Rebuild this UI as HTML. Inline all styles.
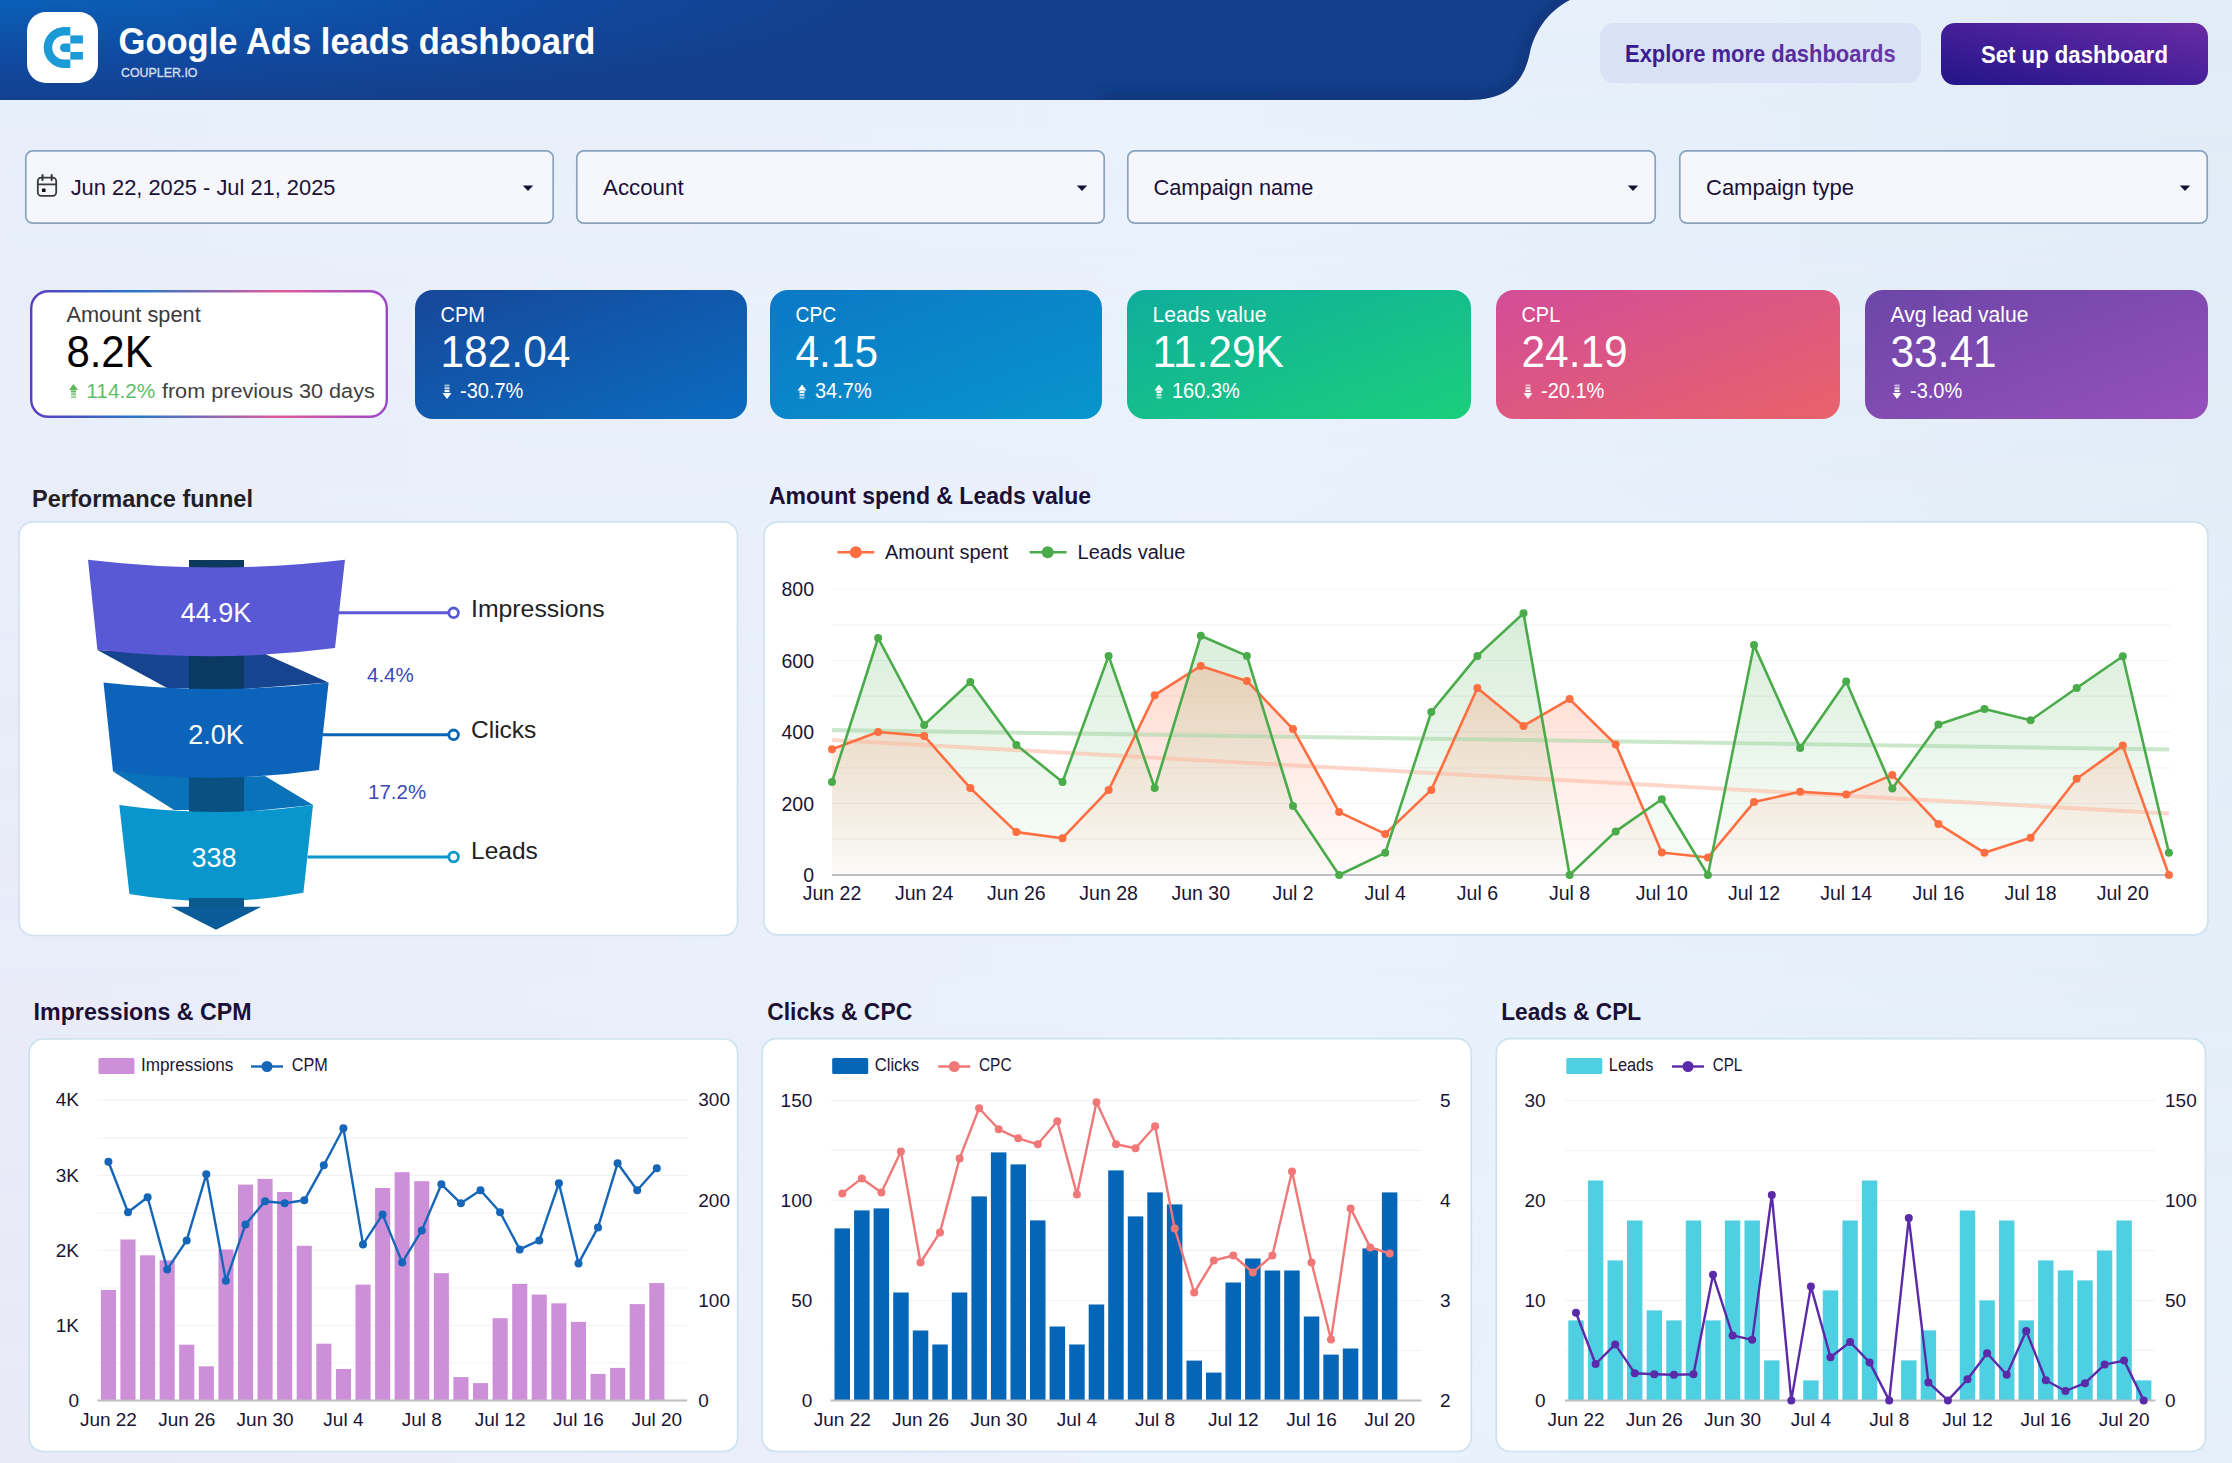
<!DOCTYPE html>
<html><head><meta charset="utf-8"><title>Google Ads leads dashboard</title>
<style>html,body{margin:0;padding:0;width:2232px;height:1463px;overflow:hidden;background:#e9f0fa;}
svg{display:block;font-family:"Liberation Sans", sans-serif;}</style></head>
<body><svg width="2232" height="1463" viewBox="0 0 2232 1463"><defs>
<linearGradient id="bgT" x1="0" y1="0" x2="1" y2="0">
  <stop offset="0" stop-color="#e8f0fb"/>
  <stop offset="0.55" stop-color="#eaf2fc"/>
  <stop offset="1" stop-color="#e1ecf8"/>
</linearGradient>
<linearGradient id="bgB" x1="0" y1="0" x2="1" y2="0">
  <stop offset="0" stop-color="#e9e9f7"/>
  <stop offset="0.55" stop-color="#eaf2fc"/>
  <stop offset="1" stop-color="#e5eff9"/>
</linearGradient>
<linearGradient id="mv" x1="0" y1="0" x2="0" y2="1">
  <stop offset="0" stop-color="#fff" stop-opacity="0"/>
  <stop offset="1" stop-color="#fff" stop-opacity="1"/>
</linearGradient>
<mask id="mB"><rect x="0" y="0" width="2232" height="1463" fill="url(#mv)"/></mask>
<radialGradient id="hdr" gradientUnits="userSpaceOnUse" cx="0" cy="0" r="100" gradientTransform="translate(0,-10) scale(9,1.2)">
  <stop offset="0" stop-color="#0a62ba"/>
  <stop offset="0.6" stop-color="#1049a0"/>
  <stop offset="1" stop-color="#143f8b"/>
</radialGradient>
<linearGradient id="btn2" x1="0" y1="1" x2="1" y2="0">
  <stop offset="0" stop-color="#22148a"/>
  <stop offset="1" stop-color="#6a2ca6"/>
</linearGradient>
<linearGradient id="btn1t" x1="0" y1="0" x2="1" y2="0">
  <stop offset="0" stop-color="#331a8e"/>
  <stop offset="1" stop-color="#6a36a8"/>
</linearGradient>
<linearGradient id="k1b" x1="0" y1="0" x2="1" y2="0">
  <stop offset="0" stop-color="#5a3cc0"/>
  <stop offset="0.3" stop-color="#2a78c8"/>
  <stop offset="0.7" stop-color="#e05a9a"/>
  <stop offset="1" stop-color="#9a48c8"/>
</linearGradient>
<linearGradient id="k2" x1="0" y1="0" x2="1" y2="1">
  <stop offset="0" stop-color="#17479a"/>
  <stop offset="1" stop-color="#0a6cc0"/>
</linearGradient>
<linearGradient id="k3" x1="0" y1="0" x2="1" y2="1">
  <stop offset="0" stop-color="#0b78c6"/>
  <stop offset="1" stop-color="#0895cc"/>
</linearGradient>
<linearGradient id="k4" x1="0" y1="0" x2="1" y2="1">
  <stop offset="0" stop-color="#10ad9c"/>
  <stop offset="1" stop-color="#1acf7c"/>
</linearGradient>
<linearGradient id="k5" x1="0" y1="0" x2="1" y2="1">
  <stop offset="0" stop-color="#d24d98"/>
  <stop offset="1" stop-color="#e9626a"/>
</linearGradient>
<linearGradient id="k6" x1="0" y1="0" x2="1" y2="1">
  <stop offset="0" stop-color="#6c46a8"/>
  <stop offset="1" stop-color="#9650bc"/>
</linearGradient>
<linearGradient id="fillG" x1="0" y1="0" x2="0" y2="1">
  <stop offset="0" stop-color="#4caf50" stop-opacity="0.22"/>
  <stop offset="1" stop-color="#4caf50" stop-opacity="0.02"/>
</linearGradient>
<linearGradient id="fillO" x1="0" y1="0" x2="0" y2="1">
  <stop offset="0" stop-color="#ff7043" stop-opacity="0.25"/>
  <stop offset="1" stop-color="#ff7043" stop-opacity="0.02"/>
</linearGradient>
<clipPath id="hclip"><path d="M0,0 L1570,0 C1546,12 1534,34 1530,52 C1524,82 1508,100 1468,100 L0,100 Z"/></clipPath><filter id="hblur" x="-5%" y="-50%" width="110%" height="200%"><feGaussianBlur stdDeviation="6"/></filter></defs>
<rect x="0" y="0" width="2232" height="1463" fill="url(#bgT)"/>
<rect x="0" y="0" width="2232" height="1463" fill="url(#bgB)" mask="url(#mB)"/>
<path d="M0,0 L1570,0 C1546,12 1534,34 1530,52 C1524,82 1508,100 1468,100 L0,100 Z" fill="url(#hdr)"/>
<g clip-path="url(#hclip)"><path d="M1570,0 C1546,12 1534,34 1530,52 C1524,82 1508,100 1468,100 L1100,100" fill="none" stroke="#0c2c68" stroke-width="12" opacity="0.45" filter="url(#hblur)"/></g>
<rect x="27" y="12" width="71" height="71" rx="19" fill="#ffffff"/>
<path d="M70.3,26.9 L64.3,26.9 A20.6,20.6 0 0 0 64.3,68.1 L70.3,68.1 L70.3,59.6 L64.3,59.6 A12.1,12.1 0 0 1 64.3,35.4 L70.3,35.4 Z" fill="#1b9ad6"/>
<rect x="70.3" y="35.4" width="12.6" height="8.1" fill="#1b9ad6"/>
<rect x="70.3" y="52" width="12.6" height="7.6" fill="#1b9ad6"/>
<path d="M70.3,43.5 L64.2,43.5 A4.25,4.25 0 0 0 64.2,52 L70.3,52 Z" fill="#1b9ad6"/>
<text x="118.5" y="54" font-size="37.5" font-weight="bold" fill="#ffffff" text-anchor="start" textLength="477" lengthAdjust="spacingAndGlyphs">Google Ads leads dashboard</text>
<text x="121" y="76.6" font-size="13" font-weight="normal" fill="#d5def0" text-anchor="start" textLength="76.5" lengthAdjust="spacingAndGlyphs" stroke="#d5def0" stroke-width="0.35">COUPLER.IO</text>
<rect x="1600" y="23" width="321" height="60" rx="14" fill="#d9e2f4"/>
<text x="1625" y="62.4" font-size="24" font-weight="bold" fill="url(#btn1t)" text-anchor="start" textLength="270.6" lengthAdjust="spacingAndGlyphs">Explore more dashboards</text>
<rect x="1941" y="23" width="267" height="62" rx="14" fill="url(#btn2)"/>
<text x="1981" y="63.2" font-size="24" font-weight="bold" fill="#ffffff" text-anchor="start" textLength="187" lengthAdjust="spacingAndGlyphs">Set up dashboard</text>
<rect x="25.8" y="150.8" width="527.4" height="72.4" rx="7" fill="#f5f7fc" stroke="#8aa3bd" stroke-width="1.7"/>
<text x="70.7" y="195" font-size="22" font-weight="normal" fill="#1a1038" text-anchor="start" textLength="264.8" lengthAdjust="spacingAndGlyphs">Jun 22, 2025 - Jul 21, 2025</text>
<path d="M522.8,185.5 L533.2,185.5 L528,191 Z" fill="#141233"/>
<rect x="576.8" y="150.8" width="527.4" height="72.4" rx="7" fill="#f5f7fc" stroke="#8aa3bd" stroke-width="1.7"/>
<text x="603" y="195" font-size="22" font-weight="normal" fill="#1a1038" text-anchor="start" textLength="80.6" lengthAdjust="spacingAndGlyphs">Account</text>
<path d="M1076.8,185.5 L1087.2,185.5 L1082,191 Z" fill="#141233"/>
<rect x="1127.8" y="150.8" width="527.4" height="72.4" rx="7" fill="#f5f7fc" stroke="#8aa3bd" stroke-width="1.7"/>
<text x="1153.5" y="195" font-size="22" font-weight="normal" fill="#1a1038" text-anchor="start" textLength="159.9" lengthAdjust="spacingAndGlyphs">Campaign name</text>
<path d="M1627.8,185.5 L1638.2,185.5 L1633,191 Z" fill="#141233"/>
<rect x="1679.8" y="150.8" width="527.4" height="72.4" rx="7" fill="#f5f7fc" stroke="#8aa3bd" stroke-width="1.7"/>
<text x="1706" y="195" font-size="22" font-weight="normal" fill="#1a1038" text-anchor="start">Campaign type</text>
<path d="M2179.8,185.5 L2190.2,185.5 L2185,191 Z" fill="#141233"/>
<g fill="none" stroke="#3a3a3a" stroke-width="1.8"><rect x="37.8" y="177.6" width="18.4" height="18.2" rx="3.5"/><line x1="37.8" y1="184.4" x2="56.2" y2="184.4"/></g>
<g stroke="#333" stroke-width="2" stroke-linecap="round"><line x1="42.5" y1="175" x2="42.5" y2="180"/><line x1="51.7" y1="175" x2="51.7" y2="180"/></g>
<rect x="42" y="188.4" width="3.6" height="3.6" rx="0.6" fill="#111"/>
<rect x="31.2" y="291.2" width="355.6" height="125.6" rx="17" fill="#ffffff" stroke="url(#k1b)" stroke-width="2.4"/>
<text x="66.4" y="322" font-size="21.5" font-weight="normal" fill="#3a3a3a" text-anchor="start" textLength="134.3" lengthAdjust="spacingAndGlyphs">Amount spent</text>
<text x="66.4" y="367" font-size="44" font-weight="normal" fill="#000000" text-anchor="start" textLength="86.2" lengthAdjust="spacingAndGlyphs">8.2K</text>
<path d="M73.5,384 L78,390 L69,390 Z" fill="#5cb85c"/>
<rect x="71" y="390.5" width="5" height="2" fill="#5cb85c" opacity="1.0"/>
<rect x="71" y="393.3" width="5" height="2" fill="#5cb85c" opacity="0.8"/>
<rect x="71" y="396.1" width="5" height="2" fill="#5cb85c" opacity="0.6"/>
<text x="86.3" y="397.7" font-size="20.5" font-weight="normal" fill="#5cbf6a" text-anchor="start" textLength="69" lengthAdjust="spacingAndGlyphs">114.2%</text>
<text x="161.9" y="397.7" font-size="20.5" font-weight="normal" fill="#3f3f3f" text-anchor="start" textLength="212.9" lengthAdjust="spacingAndGlyphs">from previous 30 days</text>
<rect x="415" y="290" width="332" height="129" rx="18" fill="url(#k2)"/>
<text x="440.5" y="322" font-size="21.5" font-weight="normal" fill="#ffffff" text-anchor="start" textLength="44.4" lengthAdjust="spacingAndGlyphs">CPM</text>
<text x="440.5" y="367" font-size="44" font-weight="normal" fill="#ffffff" text-anchor="start" textLength="129.9" lengthAdjust="spacingAndGlyphs">182.04</text>
<rect x="444.5" y="384.5" width="5" height="2" fill="#ffffff" opacity="0.6"/>
<rect x="444.5" y="387.3" width="5" height="2" fill="#ffffff" opacity="0.8"/>
<rect x="444.5" y="390.1" width="5" height="2" fill="#ffffff" opacity="1.0"/>
<path d="M442.5,393.0 L451.5,393.0 L447.0,399.0 Z" fill="#ffffff"/>
<text x="460.0" y="397.8" font-size="21.5" font-weight="normal" fill="#ffffff" text-anchor="start" textLength="63.4" lengthAdjust="spacingAndGlyphs">-30.7%</text>
<rect x="770" y="290" width="332" height="129" rx="18" fill="url(#k3)"/>
<text x="795.5" y="322" font-size="21.5" font-weight="normal" fill="#ffffff" text-anchor="start" textLength="40.8" lengthAdjust="spacingAndGlyphs">CPC</text>
<text x="795.5" y="367" font-size="44" font-weight="normal" fill="#ffffff" text-anchor="start" textLength="82.6" lengthAdjust="spacingAndGlyphs">4.15</text>
<path d="M802.0,384.5 L806.5,390.5 L797.5,390.5 Z" fill="#ffffff"/>
<rect x="799.5" y="391.0" width="5" height="2" fill="#ffffff" opacity="1.0"/>
<rect x="799.5" y="393.8" width="5" height="2" fill="#ffffff" opacity="0.8"/>
<rect x="799.5" y="396.6" width="5" height="2" fill="#ffffff" opacity="0.6"/>
<text x="815.0" y="397.8" font-size="21.5" font-weight="normal" fill="#ffffff" text-anchor="start" textLength="56.7" lengthAdjust="spacingAndGlyphs">34.7%</text>
<rect x="1127" y="290" width="344" height="129" rx="18" fill="url(#k4)"/>
<text x="1152.5" y="322" font-size="21.5" font-weight="normal" fill="#ffffff" text-anchor="start" textLength="114" lengthAdjust="spacingAndGlyphs">Leads value</text>
<text x="1152.5" y="367" font-size="44" font-weight="normal" fill="#ffffff" text-anchor="start" textLength="131.4" lengthAdjust="spacingAndGlyphs">11.29K</text>
<path d="M1159.0,384.5 L1163.5,390.5 L1154.5,390.5 Z" fill="#ffffff"/>
<rect x="1156.5" y="391.0" width="5" height="2" fill="#ffffff" opacity="1.0"/>
<rect x="1156.5" y="393.8" width="5" height="2" fill="#ffffff" opacity="0.8"/>
<rect x="1156.5" y="396.6" width="5" height="2" fill="#ffffff" opacity="0.6"/>
<text x="1172.0" y="397.8" font-size="21.5" font-weight="normal" fill="#ffffff" text-anchor="start" textLength="67.8" lengthAdjust="spacingAndGlyphs">160.3%</text>
<rect x="1496" y="290" width="344" height="129" rx="18" fill="url(#k5)"/>
<text x="1521.5" y="322" font-size="21.5" font-weight="normal" fill="#ffffff" text-anchor="start" textLength="38.7" lengthAdjust="spacingAndGlyphs">CPL</text>
<text x="1521.5" y="367" font-size="44" font-weight="normal" fill="#ffffff" text-anchor="start" textLength="106.2" lengthAdjust="spacingAndGlyphs">24.19</text>
<rect x="1525.5" y="384.5" width="5" height="2" fill="#ffffff" opacity="0.6"/>
<rect x="1525.5" y="387.3" width="5" height="2" fill="#ffffff" opacity="0.8"/>
<rect x="1525.5" y="390.1" width="5" height="2" fill="#ffffff" opacity="1.0"/>
<path d="M1523.5,393.0 L1532.5,393.0 L1528.0,399.0 Z" fill="#ffffff"/>
<text x="1541.0" y="397.8" font-size="21.5" font-weight="normal" fill="#ffffff" text-anchor="start" textLength="63.4" lengthAdjust="spacingAndGlyphs">-20.1%</text>
<rect x="1865" y="290" width="343" height="129" rx="18" fill="url(#k6)"/>
<text x="1890.5" y="322" font-size="21.5" font-weight="normal" fill="#ffffff" text-anchor="start" textLength="138" lengthAdjust="spacingAndGlyphs">Avg lead value</text>
<text x="1890.5" y="367" font-size="44" font-weight="normal" fill="#ffffff" text-anchor="start" textLength="106.2" lengthAdjust="spacingAndGlyphs">33.41</text>
<rect x="1894.5" y="384.5" width="5" height="2" fill="#ffffff" opacity="0.6"/>
<rect x="1894.5" y="387.3" width="5" height="2" fill="#ffffff" opacity="0.8"/>
<rect x="1894.5" y="390.1" width="5" height="2" fill="#ffffff" opacity="1.0"/>
<path d="M1892.5,393.0 L1901.5,393.0 L1897.0,399.0 Z" fill="#ffffff"/>
<text x="1910.0" y="397.8" font-size="21.5" font-weight="normal" fill="#ffffff" text-anchor="start" textLength="52.2" lengthAdjust="spacingAndGlyphs">-3.0%</text>
<text x="32" y="507" font-size="24" font-weight="bold" fill="#1f1f2a" text-anchor="start" textLength="221" lengthAdjust="spacingAndGlyphs">Performance funnel</text>
<text x="769" y="503.6" font-size="24" font-weight="bold" fill="#1a0f35" text-anchor="start" textLength="322" lengthAdjust="spacingAndGlyphs">Amount spend &amp; Leads value</text>
<text x="33.6" y="1020.2" font-size="24" font-weight="bold" fill="#1a0f35" text-anchor="start" textLength="218" lengthAdjust="spacingAndGlyphs">Impressions &amp; CPM</text>
<text x="767.2" y="1019.8" font-size="24" font-weight="bold" fill="#1a0f35" text-anchor="start" textLength="145" lengthAdjust="spacingAndGlyphs">Clicks &amp; CPC</text>
<text x="1501.2" y="1020.3" font-size="24" font-weight="bold" fill="#1a0f35" text-anchor="start" textLength="140" lengthAdjust="spacingAndGlyphs">Leads &amp; CPL</text>
<rect x="19.0" y="521.9" width="718.5" height="413.6" rx="14" fill="#ffffff" stroke="#cde2ee" stroke-width="1.7"/>
<rect x="763.9" y="521.9" width="1444.0" height="413.0" rx="14" fill="#ffffff" stroke="#cde2ee" stroke-width="1.7"/>
<rect x="29.1" y="1039.0" width="708.6" height="412.5" rx="14" fill="#ffffff" stroke="#cde2ee" stroke-width="1.7"/>
<rect x="762.1" y="1038.7" width="709.1999999999999" height="412.79999999999995" rx="14" fill="#ffffff" stroke="#cde2ee" stroke-width="1.7"/>
<rect x="1496.3" y="1038.7" width="709.2" height="412.79999999999995" rx="14" fill="#ffffff" stroke="#cde2ee" stroke-width="1.7"/>
<rect x="189" y="560" width="55" height="350" fill="#0b3a5e"/>
<path d="M97.4,650 L168,688.4 L189,688.4 L189,655 Z" fill="#16448f"/>
<path d="M244,655 L265,654 L328.6,682.4 L244,689 Z" fill="#16448f"/>
<rect x="189" y="655" width="55" height="34" fill="#0a3a62"/>
<path d="M113,771.4 L174,810 L189,810 L189,777 Z" fill="#0a72b8"/>
<path d="M244,777 L265,776 L313,805 L244,812 Z" fill="#0a72b8"/>
<rect x="189" y="777" width="55" height="35" fill="#0a5080"/>
<path d="M88,559.7 Q216.5,575.0999999999999 345,559.7 L335,648 Q216.5,663.5999999999999 97.4,649.8 Z" fill="#5959d6"/>
<path d="M103.5,682.4 Q216.05,695.6 328.6,682.4 L319,770 Q216.05,785.0 113,771.4 Z" fill="#0b64b9"/>
<path d="M119.3,805 Q216.15,819 313,805 L303.4,892.7 Q216.15,908.8999999999999 129.4,894 Z" fill="#0896cc"/>
<rect x="189" y="898" width="55" height="10" fill="#0a5a90"/>
<path d="M171,906.8 L261.4,906.8 L216,929.7 Z" fill="#0a5c98"/>
<text x="216" y="622" font-size="27" font-weight="normal" fill="#ffffff" text-anchor="middle">44.9K</text>
<text x="216" y="744" font-size="27" font-weight="normal" fill="#ffffff" text-anchor="middle">2.0K</text>
<text x="214" y="866.5" font-size="27" font-weight="normal" fill="#ffffff" text-anchor="middle">338</text>
<line x1="337.7" y1="612.8" x2="450" y2="612.8" stroke="#5959d6" stroke-width="3"/>
<circle cx="453.6" cy="612.8" r="4.8" fill="#ffffff" stroke="#5959d6" stroke-width="2.8"/>
<line x1="322.6" y1="734.8" x2="450" y2="734.8" stroke="#0b64b9" stroke-width="3"/>
<circle cx="453.6" cy="734.8" r="4.8" fill="#ffffff" stroke="#0b64b9" stroke-width="2.8"/>
<line x1="307.5" y1="857" x2="450" y2="857" stroke="#0896cc" stroke-width="3"/>
<circle cx="453.6" cy="857" r="4.8" fill="#ffffff" stroke="#0896cc" stroke-width="2.8"/>
<text x="471" y="617" font-size="24.5" font-weight="normal" fill="#222222" text-anchor="start" textLength="133.7" lengthAdjust="spacingAndGlyphs">Impressions</text>
<text x="471" y="738" font-size="24.5" font-weight="normal" fill="#222222" text-anchor="start">Clicks</text>
<text x="471" y="859" font-size="24.5" font-weight="normal" fill="#222222" text-anchor="start">Leads</text>
<text x="367" y="682.4" font-size="20.5" font-weight="normal" fill="#3a48b8" text-anchor="start">4.4%</text>
<text x="368" y="798.6" font-size="20.5" font-weight="normal" fill="#3a48b8" text-anchor="start">17.2%</text>
<line x1="832.0" y1="839.2" x2="2170" y2="839.2" stroke="#f3f3f6" stroke-width="1.2"/>
<line x1="832.0" y1="803.5" x2="2170" y2="803.5" stroke="#f3f3f6" stroke-width="1.2"/>
<line x1="832.0" y1="767.8" x2="2170" y2="767.8" stroke="#f3f3f6" stroke-width="1.2"/>
<line x1="832.0" y1="732.0" x2="2170" y2="732.0" stroke="#f3f3f6" stroke-width="1.2"/>
<line x1="832.0" y1="696.2" x2="2170" y2="696.2" stroke="#f3f3f6" stroke-width="1.2"/>
<line x1="832.0" y1="660.5" x2="2170" y2="660.5" stroke="#f3f3f6" stroke-width="1.2"/>
<line x1="832.0" y1="624.8" x2="2170" y2="624.8" stroke="#f3f3f6" stroke-width="1.2"/>
<line x1="832.0" y1="589.0" x2="2170" y2="589.0" stroke="#f3f3f6" stroke-width="1.2"/>
<text x="814" y="882.0" font-size="19.5" font-weight="normal" fill="#1a1535" text-anchor="end">0</text>
<text x="814" y="810.5" font-size="19.5" font-weight="normal" fill="#1a1535" text-anchor="end">200</text>
<text x="814" y="739.0" font-size="19.5" font-weight="normal" fill="#1a1535" text-anchor="end">400</text>
<text x="814" y="667.5" font-size="19.5" font-weight="normal" fill="#1a1535" text-anchor="end">600</text>
<text x="814" y="596.0" font-size="19.5" font-weight="normal" fill="#1a1535" text-anchor="end">800</text>
<path d="M832.0,875.0 L832.0,782.0 L878.1,638.0 L924.2,724.9 L970.3,682.0 L1016.4,744.9 L1062.5,782.0 L1108.6,655.9 L1154.7,788.1 L1200.8,635.8 L1246.9,655.9 L1293.0,806.0 L1339.1,875.0 L1385.2,852.8 L1431.3,712.0 L1477.4,655.9 L1523.5,613.3 L1569.6,875.0 L1615.7,831.4 L1661.8,799.2 L1707.9,875.0 L1754.0,645.1 L1800.1,748.1 L1846.2,681.6 L1892.3,788.5 L1938.4,724.5 L1984.5,709.1 L2030.6,720.2 L2076.7,688.0 L2122.8,656.2 L2168.9,852.8 L2168.9,875.0 Z" fill="url(#fillG)"/>
<path d="M832.0,875.0 L832.0,749.2 L878.1,732.0 L924.2,735.9 L970.3,788.1 L1016.4,832.1 L1062.5,838.2 L1108.6,789.9 L1154.7,695.2 L1200.8,665.9 L1246.9,680.9 L1293.0,729.1 L1339.1,812.1 L1385.2,833.9 L1431.3,789.9 L1477.4,688.0 L1523.5,725.9 L1569.6,699.1 L1615.7,744.5 L1661.8,852.5 L1707.9,857.5 L1754.0,802.1 L1800.1,791.7 L1846.2,794.6 L1892.3,774.9 L1938.4,823.9 L1984.5,852.8 L2030.6,837.8 L2076.7,778.8 L2122.8,745.6 L2168.9,875.0 L2168.9,875.0 Z" fill="url(#fillO)"/>
<line x1="832.0" y1="730" x2="2169" y2="749.5" stroke="#a8d8a8" stroke-width="4" opacity="0.6"/>
<line x1="832.0" y1="740" x2="2169" y2="813.5" stroke="#ffb8a0" stroke-width="4" opacity="0.55"/>
<line x1="832.0" y1="875.0" x2="2169" y2="875.0" stroke="#bdbdc4" stroke-width="2"/>
<polyline points="832.0,749.2 878.1,732.0 924.2,735.9 970.3,788.1 1016.4,832.1 1062.5,838.2 1108.6,789.9 1154.7,695.2 1200.8,665.9 1246.9,680.9 1293.0,729.1 1339.1,812.1 1385.2,833.9 1431.3,789.9 1477.4,688.0 1523.5,725.9 1569.6,699.1 1615.7,744.5 1661.8,852.5 1707.9,857.5 1754.0,802.1 1800.1,791.7 1846.2,794.6 1892.3,774.9 1938.4,823.9 1984.5,852.8 2030.6,837.8 2076.7,778.8 2122.8,745.6 2168.9,875.0" fill="none" stroke="#ff6e40" stroke-width="2.6" stroke-linejoin="round"/>
<circle cx="832.0" cy="749.2" r="4" fill="#ff6e40"/>
<circle cx="878.1" cy="732.0" r="4" fill="#ff6e40"/>
<circle cx="924.2" cy="735.9" r="4" fill="#ff6e40"/>
<circle cx="970.3" cy="788.1" r="4" fill="#ff6e40"/>
<circle cx="1016.4" cy="832.1" r="4" fill="#ff6e40"/>
<circle cx="1062.5" cy="838.2" r="4" fill="#ff6e40"/>
<circle cx="1108.6" cy="789.9" r="4" fill="#ff6e40"/>
<circle cx="1154.7" cy="695.2" r="4" fill="#ff6e40"/>
<circle cx="1200.8" cy="665.9" r="4" fill="#ff6e40"/>
<circle cx="1246.9" cy="680.9" r="4" fill="#ff6e40"/>
<circle cx="1293.0" cy="729.1" r="4" fill="#ff6e40"/>
<circle cx="1339.1" cy="812.1" r="4" fill="#ff6e40"/>
<circle cx="1385.2" cy="833.9" r="4" fill="#ff6e40"/>
<circle cx="1431.3" cy="789.9" r="4" fill="#ff6e40"/>
<circle cx="1477.4" cy="688.0" r="4" fill="#ff6e40"/>
<circle cx="1523.5" cy="725.9" r="4" fill="#ff6e40"/>
<circle cx="1569.6" cy="699.1" r="4" fill="#ff6e40"/>
<circle cx="1615.7" cy="744.5" r="4" fill="#ff6e40"/>
<circle cx="1661.8" cy="852.5" r="4" fill="#ff6e40"/>
<circle cx="1707.9" cy="857.5" r="4" fill="#ff6e40"/>
<circle cx="1754.0" cy="802.1" r="4" fill="#ff6e40"/>
<circle cx="1800.1" cy="791.7" r="4" fill="#ff6e40"/>
<circle cx="1846.2" cy="794.6" r="4" fill="#ff6e40"/>
<circle cx="1892.3" cy="774.9" r="4" fill="#ff6e40"/>
<circle cx="1938.4" cy="823.9" r="4" fill="#ff6e40"/>
<circle cx="1984.5" cy="852.8" r="4" fill="#ff6e40"/>
<circle cx="2030.6" cy="837.8" r="4" fill="#ff6e40"/>
<circle cx="2076.7" cy="778.8" r="4" fill="#ff6e40"/>
<circle cx="2122.8" cy="745.6" r="4" fill="#ff6e40"/>
<circle cx="2168.9" cy="875.0" r="4" fill="#ff6e40"/>
<polyline points="832.0,782.0 878.1,638.0 924.2,724.9 970.3,682.0 1016.4,744.9 1062.5,782.0 1108.6,655.9 1154.7,788.1 1200.8,635.8 1246.9,655.9 1293.0,806.0 1339.1,875.0 1385.2,852.8 1431.3,712.0 1477.4,655.9 1523.5,613.3 1569.6,875.0 1615.7,831.4 1661.8,799.2 1707.9,875.0 1754.0,645.1 1800.1,748.1 1846.2,681.6 1892.3,788.5 1938.4,724.5 1984.5,709.1 2030.6,720.2 2076.7,688.0 2122.8,656.2 2168.9,852.8" fill="none" stroke="#4aab4a" stroke-width="2.6" stroke-linejoin="round"/>
<circle cx="832.0" cy="782.0" r="4" fill="#4aab4a"/>
<circle cx="878.1" cy="638.0" r="4" fill="#4aab4a"/>
<circle cx="924.2" cy="724.9" r="4" fill="#4aab4a"/>
<circle cx="970.3" cy="682.0" r="4" fill="#4aab4a"/>
<circle cx="1016.4" cy="744.9" r="4" fill="#4aab4a"/>
<circle cx="1062.5" cy="782.0" r="4" fill="#4aab4a"/>
<circle cx="1108.6" cy="655.9" r="4" fill="#4aab4a"/>
<circle cx="1154.7" cy="788.1" r="4" fill="#4aab4a"/>
<circle cx="1200.8" cy="635.8" r="4" fill="#4aab4a"/>
<circle cx="1246.9" cy="655.9" r="4" fill="#4aab4a"/>
<circle cx="1293.0" cy="806.0" r="4" fill="#4aab4a"/>
<circle cx="1339.1" cy="875.0" r="4" fill="#4aab4a"/>
<circle cx="1385.2" cy="852.8" r="4" fill="#4aab4a"/>
<circle cx="1431.3" cy="712.0" r="4" fill="#4aab4a"/>
<circle cx="1477.4" cy="655.9" r="4" fill="#4aab4a"/>
<circle cx="1523.5" cy="613.3" r="4" fill="#4aab4a"/>
<circle cx="1569.6" cy="875.0" r="4" fill="#4aab4a"/>
<circle cx="1615.7" cy="831.4" r="4" fill="#4aab4a"/>
<circle cx="1661.8" cy="799.2" r="4" fill="#4aab4a"/>
<circle cx="1707.9" cy="875.0" r="4" fill="#4aab4a"/>
<circle cx="1754.0" cy="645.1" r="4" fill="#4aab4a"/>
<circle cx="1800.1" cy="748.1" r="4" fill="#4aab4a"/>
<circle cx="1846.2" cy="681.6" r="4" fill="#4aab4a"/>
<circle cx="1892.3" cy="788.5" r="4" fill="#4aab4a"/>
<circle cx="1938.4" cy="724.5" r="4" fill="#4aab4a"/>
<circle cx="1984.5" cy="709.1" r="4" fill="#4aab4a"/>
<circle cx="2030.6" cy="720.2" r="4" fill="#4aab4a"/>
<circle cx="2076.7" cy="688.0" r="4" fill="#4aab4a"/>
<circle cx="2122.8" cy="656.2" r="4" fill="#4aab4a"/>
<circle cx="2168.9" cy="852.8" r="4" fill="#4aab4a"/>
<text x="832.0" y="900" font-size="19.5" font-weight="normal" fill="#1a1535" text-anchor="middle">Jun 22</text>
<text x="924.2" y="900" font-size="19.5" font-weight="normal" fill="#1a1535" text-anchor="middle">Jun 24</text>
<text x="1016.4" y="900" font-size="19.5" font-weight="normal" fill="#1a1535" text-anchor="middle">Jun 26</text>
<text x="1108.6" y="900" font-size="19.5" font-weight="normal" fill="#1a1535" text-anchor="middle">Jun 28</text>
<text x="1200.8" y="900" font-size="19.5" font-weight="normal" fill="#1a1535" text-anchor="middle">Jun 30</text>
<text x="1293.0" y="900" font-size="19.5" font-weight="normal" fill="#1a1535" text-anchor="middle">Jul 2</text>
<text x="1385.2" y="900" font-size="19.5" font-weight="normal" fill="#1a1535" text-anchor="middle">Jul 4</text>
<text x="1477.4" y="900" font-size="19.5" font-weight="normal" fill="#1a1535" text-anchor="middle">Jul 6</text>
<text x="1569.6" y="900" font-size="19.5" font-weight="normal" fill="#1a1535" text-anchor="middle">Jul 8</text>
<text x="1661.8000000000002" y="900" font-size="19.5" font-weight="normal" fill="#1a1535" text-anchor="middle">Jul 10</text>
<text x="1754.0" y="900" font-size="19.5" font-weight="normal" fill="#1a1535" text-anchor="middle">Jul 12</text>
<text x="1846.2" y="900" font-size="19.5" font-weight="normal" fill="#1a1535" text-anchor="middle">Jul 14</text>
<text x="1938.4" y="900" font-size="19.5" font-weight="normal" fill="#1a1535" text-anchor="middle">Jul 16</text>
<text x="2030.6000000000001" y="900" font-size="19.5" font-weight="normal" fill="#1a1535" text-anchor="middle">Jul 18</text>
<text x="2122.8" y="900" font-size="19.5" font-weight="normal" fill="#1a1535" text-anchor="middle">Jul 20</text>
<line x1="837.4" y1="552.3" x2="874.3" y2="552.3" stroke="#ff6e40" stroke-width="2.6"/><circle cx="855.8" cy="552.3" r="6" fill="#ff6e40"/>
<text x="885" y="559" font-size="20" font-weight="normal" fill="#1a1535" text-anchor="start">Amount spent</text>
<line x1="1029.6" y1="552.3" x2="1066.5" y2="552.3" stroke="#4aab4a" stroke-width="2.6"/><circle cx="1047.7" cy="552.3" r="6" fill="#4aab4a"/>
<text x="1077.6" y="559" font-size="20" font-weight="normal" fill="#1a1535" text-anchor="start">Leads value</text>
<line x1="97.4" y1="1363.0" x2="687.2" y2="1363.0" stroke="#f3f3f6" stroke-width="1.2"/>
<line x1="97.4" y1="1325.5" x2="687.2" y2="1325.5" stroke="#f3f3f6" stroke-width="1.2"/>
<line x1="97.4" y1="1288.0" x2="687.2" y2="1288.0" stroke="#f3f3f6" stroke-width="1.2"/>
<line x1="97.4" y1="1250.4" x2="687.2" y2="1250.4" stroke="#f3f3f6" stroke-width="1.2"/>
<line x1="97.4" y1="1212.8" x2="687.2" y2="1212.8" stroke="#f3f3f6" stroke-width="1.2"/>
<line x1="97.4" y1="1175.3" x2="687.2" y2="1175.3" stroke="#f3f3f6" stroke-width="1.2"/>
<line x1="97.4" y1="1137.8" x2="687.2" y2="1137.8" stroke="#f3f3f6" stroke-width="1.2"/>
<line x1="97.4" y1="1100.2" x2="687.2" y2="1100.2" stroke="#f3f3f6" stroke-width="1.2"/>
<rect x="100.9" y="1290.0" width="15.1" height="110.6" fill="#cd90d8"/>
<rect x="120.4" y="1239.5" width="15.1" height="161.1" fill="#cd90d8"/>
<rect x="140.0" y="1255.3" width="15.1" height="145.3" fill="#cd90d8"/>
<rect x="159.6" y="1260.3" width="15.1" height="140.3" fill="#cd90d8"/>
<rect x="179.2" y="1344.7" width="15.1" height="55.9" fill="#cd90d8"/>
<rect x="198.8" y="1366.3" width="15.1" height="34.3" fill="#cd90d8"/>
<rect x="218.4" y="1249.5" width="15.1" height="151.1" fill="#cd90d8"/>
<rect x="238.0" y="1184.6" width="15.1" height="216.0" fill="#cd90d8"/>
<rect x="257.5" y="1178.9" width="15.1" height="221.7" fill="#cd90d8"/>
<rect x="277.1" y="1192.0" width="15.1" height="208.6" fill="#cd90d8"/>
<rect x="296.7" y="1245.8" width="15.1" height="154.8" fill="#cd90d8"/>
<rect x="316.3" y="1343.7" width="15.1" height="56.9" fill="#cd90d8"/>
<rect x="335.9" y="1369.0" width="15.1" height="31.6" fill="#cd90d8"/>
<rect x="355.5" y="1284.6" width="15.1" height="116.0" fill="#cd90d8"/>
<rect x="375.1" y="1188.0" width="15.1" height="212.6" fill="#cd90d8"/>
<rect x="394.6" y="1172.2" width="15.1" height="228.4" fill="#cd90d8"/>
<rect x="414.2" y="1181.2" width="15.1" height="219.4" fill="#cd90d8"/>
<rect x="433.8" y="1273.2" width="15.1" height="127.4" fill="#cd90d8"/>
<rect x="453.4" y="1377.1" width="15.1" height="23.5" fill="#cd90d8"/>
<rect x="473.0" y="1383.1" width="15.1" height="17.5" fill="#cd90d8"/>
<rect x="492.6" y="1318.2" width="15.1" height="82.4" fill="#cd90d8"/>
<rect x="512.2" y="1283.8" width="15.1" height="116.8" fill="#cd90d8"/>
<rect x="531.7" y="1294.6" width="15.1" height="106.0" fill="#cd90d8"/>
<rect x="551.3" y="1303.3" width="15.1" height="97.3" fill="#cd90d8"/>
<rect x="570.9" y="1321.9" width="15.1" height="78.7" fill="#cd90d8"/>
<rect x="590.5" y="1373.9" width="15.1" height="26.7" fill="#cd90d8"/>
<rect x="610.1" y="1367.9" width="15.1" height="32.7" fill="#cd90d8"/>
<rect x="629.7" y="1304.1" width="15.1" height="96.5" fill="#cd90d8"/>
<rect x="649.3" y="1283.1" width="15.1" height="117.5" fill="#cd90d8"/>
<line x1="97.4" y1="1400.6" x2="687.2" y2="1400.6" stroke="#bdbdc4" stroke-width="2"/>
<polyline points="108.4,1161.7 128.0,1212.3 147.6,1197.3 167.2,1269.4 186.7,1240.4 206.3,1174.3 225.9,1280.8 245.5,1224.4 265.1,1201.3 284.7,1203.3 304.3,1200.3 323.8,1165.3 343.4,1128.2 363.0,1244.4 382.6,1214.4 402.2,1262.4 421.8,1230.4 441.4,1184.3 460.9,1203.3 480.5,1190.3 500.1,1212.3 519.7,1249.4 539.3,1240.4 558.9,1183.3 578.5,1263.4 598.0,1227.4 617.6,1163.3 637.2,1190.3 656.8,1168.3" fill="none" stroke="#1565b8" stroke-width="2.4" stroke-linejoin="round"/>
<circle cx="108.4" cy="1161.7" r="4" fill="#1565b8"/>
<circle cx="128.0" cy="1212.3" r="4" fill="#1565b8"/>
<circle cx="147.6" cy="1197.3" r="4" fill="#1565b8"/>
<circle cx="167.2" cy="1269.4" r="4" fill="#1565b8"/>
<circle cx="186.7" cy="1240.4" r="4" fill="#1565b8"/>
<circle cx="206.3" cy="1174.3" r="4" fill="#1565b8"/>
<circle cx="225.9" cy="1280.8" r="4" fill="#1565b8"/>
<circle cx="245.5" cy="1224.4" r="4" fill="#1565b8"/>
<circle cx="265.1" cy="1201.3" r="4" fill="#1565b8"/>
<circle cx="284.7" cy="1203.3" r="4" fill="#1565b8"/>
<circle cx="304.3" cy="1200.3" r="4" fill="#1565b8"/>
<circle cx="323.8" cy="1165.3" r="4" fill="#1565b8"/>
<circle cx="343.4" cy="1128.2" r="4" fill="#1565b8"/>
<circle cx="363.0" cy="1244.4" r="4" fill="#1565b8"/>
<circle cx="382.6" cy="1214.4" r="4" fill="#1565b8"/>
<circle cx="402.2" cy="1262.4" r="4" fill="#1565b8"/>
<circle cx="421.8" cy="1230.4" r="4" fill="#1565b8"/>
<circle cx="441.4" cy="1184.3" r="4" fill="#1565b8"/>
<circle cx="460.9" cy="1203.3" r="4" fill="#1565b8"/>
<circle cx="480.5" cy="1190.3" r="4" fill="#1565b8"/>
<circle cx="500.1" cy="1212.3" r="4" fill="#1565b8"/>
<circle cx="519.7" cy="1249.4" r="4" fill="#1565b8"/>
<circle cx="539.3" cy="1240.4" r="4" fill="#1565b8"/>
<circle cx="558.9" cy="1183.3" r="4" fill="#1565b8"/>
<circle cx="578.5" cy="1263.4" r="4" fill="#1565b8"/>
<circle cx="598.0" cy="1227.4" r="4" fill="#1565b8"/>
<circle cx="617.6" cy="1163.3" r="4" fill="#1565b8"/>
<circle cx="637.2" cy="1190.3" r="4" fill="#1565b8"/>
<circle cx="656.8" cy="1168.3" r="4" fill="#1565b8"/>
<text x="79" y="1406.8" font-size="19" font-weight="normal" fill="#1a1535" text-anchor="end">0</text>
<text x="79" y="1331.7" font-size="19" font-weight="normal" fill="#1a1535" text-anchor="end">1K</text>
<text x="79" y="1256.6000000000001" font-size="19" font-weight="normal" fill="#1a1535" text-anchor="end">2K</text>
<text x="79" y="1181.5" font-size="19" font-weight="normal" fill="#1a1535" text-anchor="end">3K</text>
<text x="79" y="1106.4" font-size="19" font-weight="normal" fill="#1a1535" text-anchor="end">4K</text>
<text x="698.3" y="1406.8" font-size="19" font-weight="normal" fill="#1a1535" text-anchor="start">0</text>
<text x="698.3" y="1306.6666666666667" font-size="19" font-weight="normal" fill="#1a1535" text-anchor="start">100</text>
<text x="698.3" y="1206.5333333333333" font-size="19" font-weight="normal" fill="#1a1535" text-anchor="start">200</text>
<text x="698.3" y="1106.4" font-size="19" font-weight="normal" fill="#1a1535" text-anchor="start">300</text>
<text x="108.4" y="1426" font-size="19" font-weight="normal" fill="#1a1535" text-anchor="middle">Jun 22</text>
<text x="186.744" y="1426" font-size="19" font-weight="normal" fill="#1a1535" text-anchor="middle">Jun 26</text>
<text x="265.08799999999997" y="1426" font-size="19" font-weight="normal" fill="#1a1535" text-anchor="middle">Jun 30</text>
<text x="343.432" y="1426" font-size="19" font-weight="normal" fill="#1a1535" text-anchor="middle">Jul 4</text>
<text x="421.77599999999995" y="1426" font-size="19" font-weight="normal" fill="#1a1535" text-anchor="middle">Jul 8</text>
<text x="500.12" y="1426" font-size="19" font-weight="normal" fill="#1a1535" text-anchor="middle">Jul 12</text>
<text x="578.4639999999999" y="1426" font-size="19" font-weight="normal" fill="#1a1535" text-anchor="middle">Jul 16</text>
<text x="656.8079999999999" y="1426" font-size="19" font-weight="normal" fill="#1a1535" text-anchor="middle">Jul 20</text>
<rect x="98.5" y="1058" width="36" height="16" rx="1.5" fill="#cd90d8"/>
<text x="141.0" y="1071.3" font-size="18.5" font-weight="normal" fill="#1a1535" text-anchor="start" textLength="92.4" lengthAdjust="spacingAndGlyphs">Impressions</text>
<line x1="251" y1="1066.5" x2="283" y2="1066.5" stroke="#1565b8" stroke-width="2.4"/><circle cx="267" cy="1066.5" r="5.5" fill="#1565b8"/>
<text x="291.7" y="1071.3" font-size="18.5" font-weight="normal" fill="#1a1535" text-anchor="start" textLength="36" lengthAdjust="spacingAndGlyphs">CPM</text>
<line x1="830.6" y1="1350.5" x2="1421.4" y2="1350.5" stroke="#f3f3f6" stroke-width="1.2"/>
<line x1="830.6" y1="1300.5" x2="1421.4" y2="1300.5" stroke="#f3f3f6" stroke-width="1.2"/>
<line x1="830.6" y1="1250.4" x2="1421.4" y2="1250.4" stroke="#f3f3f6" stroke-width="1.2"/>
<line x1="830.6" y1="1200.4" x2="1421.4" y2="1200.4" stroke="#f3f3f6" stroke-width="1.2"/>
<line x1="830.6" y1="1150.3" x2="1421.4" y2="1150.3" stroke="#f3f3f6" stroke-width="1.2"/>
<line x1="830.6" y1="1100.3" x2="1421.4" y2="1100.3" stroke="#f3f3f6" stroke-width="1.2"/>
<rect x="834.5" y="1228.4" width="15.5" height="172.2" fill="#0565b6"/>
<rect x="854.1" y="1210.4" width="15.5" height="190.2" fill="#0565b6"/>
<rect x="873.6" y="1208.4" width="15.5" height="192.2" fill="#0565b6"/>
<rect x="893.2" y="1292.5" width="15.5" height="108.1" fill="#0565b6"/>
<rect x="912.8" y="1330.5" width="15.5" height="70.1" fill="#0565b6"/>
<rect x="932.3" y="1344.5" width="15.5" height="56.1" fill="#0565b6"/>
<rect x="951.8" y="1292.5" width="15.5" height="108.1" fill="#0565b6"/>
<rect x="971.4" y="1196.4" width="15.5" height="204.2" fill="#0565b6"/>
<rect x="990.9" y="1152.4" width="15.5" height="248.2" fill="#0565b6"/>
<rect x="1010.5" y="1164.4" width="15.5" height="236.2" fill="#0565b6"/>
<rect x="1030.0" y="1220.4" width="15.5" height="180.2" fill="#0565b6"/>
<rect x="1049.6" y="1326.5" width="15.5" height="74.1" fill="#0565b6"/>
<rect x="1069.2" y="1344.5" width="15.5" height="56.1" fill="#0565b6"/>
<rect x="1088.7" y="1304.5" width="15.5" height="96.1" fill="#0565b6"/>
<rect x="1108.2" y="1170.4" width="15.5" height="230.2" fill="#0565b6"/>
<rect x="1127.8" y="1216.4" width="15.5" height="184.2" fill="#0565b6"/>
<rect x="1147.3" y="1192.4" width="15.5" height="208.2" fill="#0565b6"/>
<rect x="1166.9" y="1204.4" width="15.5" height="196.2" fill="#0565b6"/>
<rect x="1186.5" y="1360.6" width="15.5" height="40.0" fill="#0565b6"/>
<rect x="1206.0" y="1372.6" width="15.5" height="28.0" fill="#0565b6"/>
<rect x="1225.5" y="1282.5" width="15.5" height="118.1" fill="#0565b6"/>
<rect x="1245.1" y="1258.5" width="15.5" height="142.1" fill="#0565b6"/>
<rect x="1264.7" y="1270.5" width="15.5" height="130.1" fill="#0565b6"/>
<rect x="1284.2" y="1270.5" width="15.5" height="130.1" fill="#0565b6"/>
<rect x="1303.8" y="1316.5" width="15.5" height="84.1" fill="#0565b6"/>
<rect x="1323.3" y="1354.6" width="15.5" height="46.0" fill="#0565b6"/>
<rect x="1342.8" y="1348.5" width="15.5" height="52.1" fill="#0565b6"/>
<rect x="1362.4" y="1248.4" width="15.5" height="152.2" fill="#0565b6"/>
<rect x="1381.9" y="1192.4" width="15.5" height="208.2" fill="#0565b6"/>
<line x1="830.6" y1="1400.6" x2="1421.4" y2="1400.6" stroke="#bdbdc4" stroke-width="2"/>
<polyline points="842.3,1193.4 861.8,1178.4 881.4,1192.4 900.9,1151.4 920.5,1262.5 940.0,1232.4 959.6,1158.4 979.1,1108.3 998.7,1129.3 1018.2,1138.3 1037.8,1144.3 1057.3,1121.3 1076.9,1194.4 1096.5,1102.3 1116.0,1144.3 1135.5,1148.3 1155.1,1126.3 1174.7,1228.4 1194.2,1292.5 1213.8,1260.5 1233.3,1255.5 1252.8,1272.5 1272.4,1255.5 1292.0,1171.4 1311.5,1262.5 1331.0,1339.5 1350.6,1208.4 1370.2,1247.4 1389.7,1253.5" fill="none" stroke="#f07878" stroke-width="2.4" stroke-linejoin="round"/>
<circle cx="842.3" cy="1193.4" r="4" fill="#f07878"/>
<circle cx="861.8" cy="1178.4" r="4" fill="#f07878"/>
<circle cx="881.4" cy="1192.4" r="4" fill="#f07878"/>
<circle cx="900.9" cy="1151.4" r="4" fill="#f07878"/>
<circle cx="920.5" cy="1262.5" r="4" fill="#f07878"/>
<circle cx="940.0" cy="1232.4" r="4" fill="#f07878"/>
<circle cx="959.6" cy="1158.4" r="4" fill="#f07878"/>
<circle cx="979.1" cy="1108.3" r="4" fill="#f07878"/>
<circle cx="998.7" cy="1129.3" r="4" fill="#f07878"/>
<circle cx="1018.2" cy="1138.3" r="4" fill="#f07878"/>
<circle cx="1037.8" cy="1144.3" r="4" fill="#f07878"/>
<circle cx="1057.3" cy="1121.3" r="4" fill="#f07878"/>
<circle cx="1076.9" cy="1194.4" r="4" fill="#f07878"/>
<circle cx="1096.5" cy="1102.3" r="4" fill="#f07878"/>
<circle cx="1116.0" cy="1144.3" r="4" fill="#f07878"/>
<circle cx="1135.5" cy="1148.3" r="4" fill="#f07878"/>
<circle cx="1155.1" cy="1126.3" r="4" fill="#f07878"/>
<circle cx="1174.7" cy="1228.4" r="4" fill="#f07878"/>
<circle cx="1194.2" cy="1292.5" r="4" fill="#f07878"/>
<circle cx="1213.8" cy="1260.5" r="4" fill="#f07878"/>
<circle cx="1233.3" cy="1255.5" r="4" fill="#f07878"/>
<circle cx="1252.8" cy="1272.5" r="4" fill="#f07878"/>
<circle cx="1272.4" cy="1255.5" r="4" fill="#f07878"/>
<circle cx="1292.0" cy="1171.4" r="4" fill="#f07878"/>
<circle cx="1311.5" cy="1262.5" r="4" fill="#f07878"/>
<circle cx="1331.0" cy="1339.5" r="4" fill="#f07878"/>
<circle cx="1350.6" cy="1208.4" r="4" fill="#f07878"/>
<circle cx="1370.2" cy="1247.4" r="4" fill="#f07878"/>
<circle cx="1389.7" cy="1253.5" r="4" fill="#f07878"/>
<text x="812.3" y="1406.8" font-size="19" font-weight="normal" fill="#1a1535" text-anchor="end">0</text>
<text x="812.3" y="1306.7" font-size="19" font-weight="normal" fill="#1a1535" text-anchor="end">50</text>
<text x="812.3" y="1206.6" font-size="19" font-weight="normal" fill="#1a1535" text-anchor="end">100</text>
<text x="812.3" y="1106.5" font-size="19" font-weight="normal" fill="#1a1535" text-anchor="end">150</text>
<text x="1440" y="1406.8" font-size="19" font-weight="normal" fill="#1a1535" text-anchor="start">2</text>
<text x="1440" y="1306.7" font-size="19" font-weight="normal" fill="#1a1535" text-anchor="start">3</text>
<text x="1440" y="1206.6" font-size="19" font-weight="normal" fill="#1a1535" text-anchor="start">4</text>
<text x="1440" y="1106.5" font-size="19" font-weight="normal" fill="#1a1535" text-anchor="start">5</text>
<text x="842.3" y="1426" font-size="19" font-weight="normal" fill="#1a1535" text-anchor="middle">Jun 22</text>
<text x="920.5" y="1426" font-size="19" font-weight="normal" fill="#1a1535" text-anchor="middle">Jun 26</text>
<text x="998.6999999999999" y="1426" font-size="19" font-weight="normal" fill="#1a1535" text-anchor="middle">Jun 30</text>
<text x="1076.9" y="1426" font-size="19" font-weight="normal" fill="#1a1535" text-anchor="middle">Jul 4</text>
<text x="1155.1" y="1426" font-size="19" font-weight="normal" fill="#1a1535" text-anchor="middle">Jul 8</text>
<text x="1233.3" y="1426" font-size="19" font-weight="normal" fill="#1a1535" text-anchor="middle">Jul 12</text>
<text x="1311.5" y="1426" font-size="19" font-weight="normal" fill="#1a1535" text-anchor="middle">Jul 16</text>
<text x="1389.6999999999998" y="1426" font-size="19" font-weight="normal" fill="#1a1535" text-anchor="middle">Jul 20</text>
<rect x="832.2" y="1058" width="36" height="16" rx="1.5" fill="#0565b6"/>
<text x="874.7" y="1071.3" font-size="18.5" font-weight="normal" fill="#1a1535" text-anchor="start" textLength="44.4" lengthAdjust="spacingAndGlyphs">Clicks</text>
<line x1="938.3" y1="1066.5" x2="970.3" y2="1066.5" stroke="#f07878" stroke-width="2.4"/><circle cx="954.3" cy="1066.5" r="5.5" fill="#f07878"/>
<text x="979.0" y="1071.3" font-size="18.5" font-weight="normal" fill="#1a1535" text-anchor="start" textLength="32.5" lengthAdjust="spacingAndGlyphs">CPC</text>
<line x1="1564.9" y1="1350.4" x2="2155.5" y2="1350.4" stroke="#f3f3f6" stroke-width="1.2"/>
<line x1="1564.9" y1="1300.4" x2="2155.5" y2="1300.4" stroke="#f3f3f6" stroke-width="1.2"/>
<line x1="1564.9" y1="1250.5" x2="2155.5" y2="1250.5" stroke="#f3f3f6" stroke-width="1.2"/>
<line x1="1564.9" y1="1200.5" x2="2155.5" y2="1200.5" stroke="#f3f3f6" stroke-width="1.2"/>
<line x1="1564.9" y1="1150.5" x2="2155.5" y2="1150.5" stroke="#f3f3f6" stroke-width="1.2"/>
<line x1="1564.9" y1="1100.5" x2="2155.5" y2="1100.5" stroke="#f3f3f6" stroke-width="1.2"/>
<rect x="1568.3" y="1320.4" width="15.4" height="80.0" fill="#4ecfe2"/>
<rect x="1587.9" y="1180.5" width="15.4" height="219.9" fill="#4ecfe2"/>
<rect x="1607.5" y="1260.4" width="15.4" height="140.0" fill="#4ecfe2"/>
<rect x="1627.0" y="1220.5" width="15.4" height="179.9" fill="#4ecfe2"/>
<rect x="1646.6" y="1310.4" width="15.4" height="90.0" fill="#4ecfe2"/>
<rect x="1666.2" y="1320.4" width="15.4" height="80.0" fill="#4ecfe2"/>
<rect x="1685.8" y="1220.5" width="15.4" height="179.9" fill="#4ecfe2"/>
<rect x="1705.3" y="1320.4" width="15.4" height="80.0" fill="#4ecfe2"/>
<rect x="1724.9" y="1220.5" width="15.4" height="179.9" fill="#4ecfe2"/>
<rect x="1744.5" y="1220.5" width="15.4" height="179.9" fill="#4ecfe2"/>
<rect x="1764.1" y="1360.4" width="15.4" height="40.0" fill="#4ecfe2"/>
<rect x="1803.2" y="1380.4" width="15.4" height="20.0" fill="#4ecfe2"/>
<rect x="1822.8" y="1290.4" width="15.4" height="110.0" fill="#4ecfe2"/>
<rect x="1842.4" y="1220.5" width="15.4" height="179.9" fill="#4ecfe2"/>
<rect x="1861.9" y="1180.5" width="15.4" height="219.9" fill="#4ecfe2"/>
<rect x="1901.1" y="1360.4" width="15.4" height="40.0" fill="#4ecfe2"/>
<rect x="1920.7" y="1330.4" width="15.4" height="70.0" fill="#4ecfe2"/>
<rect x="1959.8" y="1210.5" width="15.4" height="189.9" fill="#4ecfe2"/>
<rect x="1979.4" y="1300.4" width="15.4" height="100.0" fill="#4ecfe2"/>
<rect x="1999.0" y="1220.5" width="15.4" height="179.9" fill="#4ecfe2"/>
<rect x="2018.5" y="1320.4" width="15.4" height="80.0" fill="#4ecfe2"/>
<rect x="2038.1" y="1260.4" width="15.4" height="140.0" fill="#4ecfe2"/>
<rect x="2057.7" y="1270.4" width="15.4" height="130.0" fill="#4ecfe2"/>
<rect x="2077.3" y="1280.4" width="15.4" height="120.0" fill="#4ecfe2"/>
<rect x="2096.9" y="1250.5" width="15.4" height="150.0" fill="#4ecfe2"/>
<rect x="2116.4" y="1220.5" width="15.4" height="179.9" fill="#4ecfe2"/>
<rect x="2136.0" y="1380.4" width="15.4" height="20.0" fill="#4ecfe2"/>
<line x1="1564.9" y1="1400.4" x2="2155.5" y2="1400.4" stroke="#bdbdc4" stroke-width="2"/>
<polyline points="1576.0,1312.8 1595.6,1364.0 1615.2,1344.4 1634.7,1373.2 1654.3,1374.2 1673.9,1374.8 1693.5,1374.2 1713.0,1274.8 1732.6,1335.4 1752.2,1339.8 1771.8,1195.1 1791.3,1400.4 1810.9,1286.4 1830.5,1357.2 1850.1,1342.0 1869.6,1362.4 1889.2,1400.4 1908.8,1218.1 1928.4,1382.4 1947.9,1400.4 1967.5,1379.2 1987.1,1353.2 2006.7,1374.8 2026.2,1331.0 2045.8,1380.2 2065.4,1391.0 2085.0,1383.2 2104.6,1364.6 2124.1,1360.6 2143.7,1400.4" fill="none" stroke="#5b2aa8" stroke-width="2.4" stroke-linejoin="round"/>
<circle cx="1576.0" cy="1312.8" r="4" fill="#5b2aa8"/>
<circle cx="1595.6" cy="1364.0" r="4" fill="#5b2aa8"/>
<circle cx="1615.2" cy="1344.4" r="4" fill="#5b2aa8"/>
<circle cx="1634.7" cy="1373.2" r="4" fill="#5b2aa8"/>
<circle cx="1654.3" cy="1374.2" r="4" fill="#5b2aa8"/>
<circle cx="1673.9" cy="1374.8" r="4" fill="#5b2aa8"/>
<circle cx="1693.5" cy="1374.2" r="4" fill="#5b2aa8"/>
<circle cx="1713.0" cy="1274.8" r="4" fill="#5b2aa8"/>
<circle cx="1732.6" cy="1335.4" r="4" fill="#5b2aa8"/>
<circle cx="1752.2" cy="1339.8" r="4" fill="#5b2aa8"/>
<circle cx="1771.8" cy="1195.1" r="4" fill="#5b2aa8"/>
<circle cx="1791.3" cy="1400.4" r="4" fill="#5b2aa8"/>
<circle cx="1810.9" cy="1286.4" r="4" fill="#5b2aa8"/>
<circle cx="1830.5" cy="1357.2" r="4" fill="#5b2aa8"/>
<circle cx="1850.1" cy="1342.0" r="4" fill="#5b2aa8"/>
<circle cx="1869.6" cy="1362.4" r="4" fill="#5b2aa8"/>
<circle cx="1889.2" cy="1400.4" r="4" fill="#5b2aa8"/>
<circle cx="1908.8" cy="1218.1" r="4" fill="#5b2aa8"/>
<circle cx="1928.4" cy="1382.4" r="4" fill="#5b2aa8"/>
<circle cx="1947.9" cy="1400.4" r="4" fill="#5b2aa8"/>
<circle cx="1967.5" cy="1379.2" r="4" fill="#5b2aa8"/>
<circle cx="1987.1" cy="1353.2" r="4" fill="#5b2aa8"/>
<circle cx="2006.7" cy="1374.8" r="4" fill="#5b2aa8"/>
<circle cx="2026.2" cy="1331.0" r="4" fill="#5b2aa8"/>
<circle cx="2045.8" cy="1380.2" r="4" fill="#5b2aa8"/>
<circle cx="2065.4" cy="1391.0" r="4" fill="#5b2aa8"/>
<circle cx="2085.0" cy="1383.2" r="4" fill="#5b2aa8"/>
<circle cx="2104.6" cy="1364.6" r="4" fill="#5b2aa8"/>
<circle cx="2124.1" cy="1360.6" r="4" fill="#5b2aa8"/>
<circle cx="2143.7" cy="1400.4" r="4" fill="#5b2aa8"/>
<text x="1545.7" y="1406.6000000000001" font-size="19" font-weight="normal" fill="#1a1535" text-anchor="end">0</text>
<text x="1545.7" y="1306.6333333333334" font-size="19" font-weight="normal" fill="#1a1535" text-anchor="end">10</text>
<text x="1545.7" y="1206.6666666666667" font-size="19" font-weight="normal" fill="#1a1535" text-anchor="end">20</text>
<text x="1545.7" y="1106.7" font-size="19" font-weight="normal" fill="#1a1535" text-anchor="end">30</text>
<text x="2165" y="1406.6000000000001" font-size="19" font-weight="normal" fill="#1a1535" text-anchor="start">0</text>
<text x="2165" y="1306.6333333333334" font-size="19" font-weight="normal" fill="#1a1535" text-anchor="start">50</text>
<text x="2165" y="1206.6666666666667" font-size="19" font-weight="normal" fill="#1a1535" text-anchor="start">100</text>
<text x="2165" y="1106.7" font-size="19" font-weight="normal" fill="#1a1535" text-anchor="start">150</text>
<text x="1576.0" y="1426" font-size="19" font-weight="normal" fill="#1a1535" text-anchor="middle">Jun 22</text>
<text x="1654.304" y="1426" font-size="19" font-weight="normal" fill="#1a1535" text-anchor="middle">Jun 26</text>
<text x="1732.608" y="1426" font-size="19" font-weight="normal" fill="#1a1535" text-anchor="middle">Jun 30</text>
<text x="1810.912" y="1426" font-size="19" font-weight="normal" fill="#1a1535" text-anchor="middle">Jul 4</text>
<text x="1889.216" y="1426" font-size="19" font-weight="normal" fill="#1a1535" text-anchor="middle">Jul 8</text>
<text x="1967.52" y="1426" font-size="19" font-weight="normal" fill="#1a1535" text-anchor="middle">Jul 12</text>
<text x="2045.824" y="1426" font-size="19" font-weight="normal" fill="#1a1535" text-anchor="middle">Jul 16</text>
<text x="2124.128" y="1426" font-size="19" font-weight="normal" fill="#1a1535" text-anchor="middle">Jul 20</text>
<rect x="1566.3" y="1058" width="36" height="16" rx="1.5" fill="#4ecfe2"/>
<text x="1608.8" y="1071.3" font-size="18.5" font-weight="normal" fill="#1a1535" text-anchor="start" textLength="44.5" lengthAdjust="spacingAndGlyphs">Leads</text>
<line x1="1672" y1="1066.5" x2="1704" y2="1066.5" stroke="#5b2aa8" stroke-width="2.4"/><circle cx="1688" cy="1066.5" r="5.5" fill="#5b2aa8"/>
<text x="1712.7" y="1071.3" font-size="18.5" font-weight="normal" fill="#1a1535" text-anchor="start" textLength="29.6" lengthAdjust="spacingAndGlyphs">CPL</text>
</svg></body></html>
